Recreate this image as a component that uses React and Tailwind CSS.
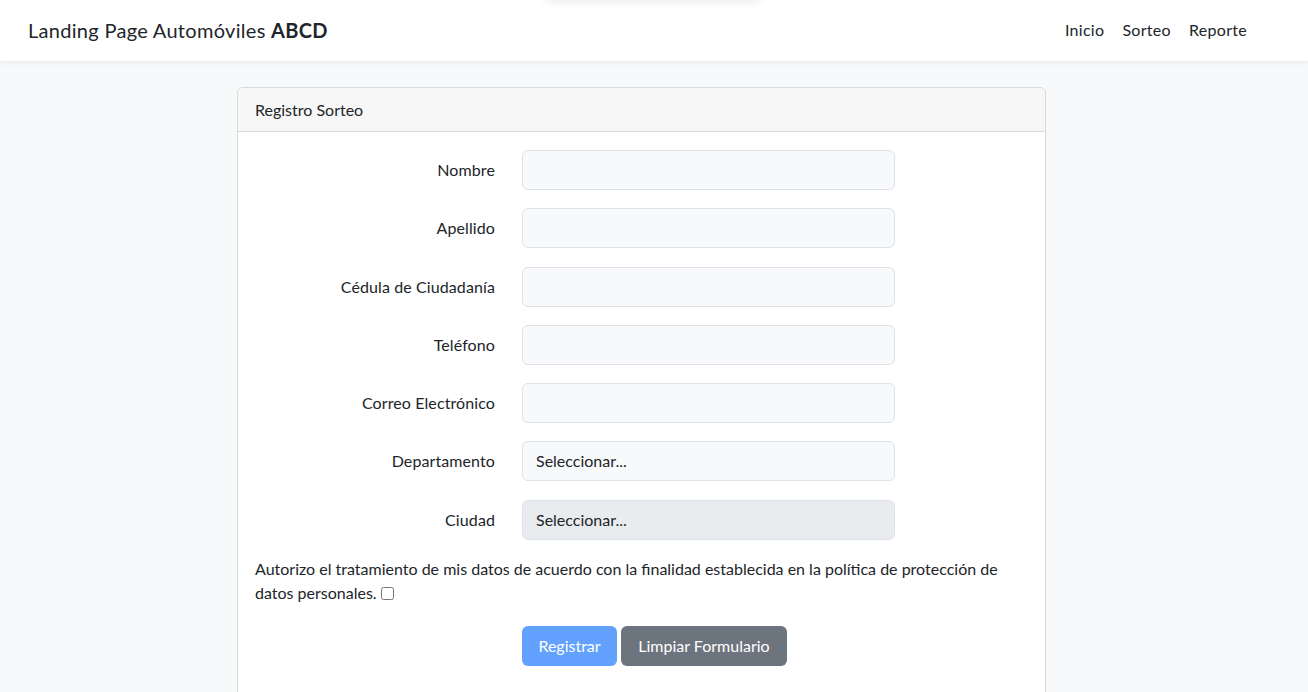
import React from 'react';

const FIELDS = ['Nombre', 'Apellido', 'Cédula de Ciudadanía', 'Teléfono', 'Correo Electrónico'];

const Row = ({ label, children }) => (
    <div className="flex items-center h-[40px]">
        <label className="w-[240px] text-right text-[16px] tracking-[0.1px]">{label}</label>
        <div className="ml-[27px] w-[373px]">{children}</div>
    </div>
);

export default function App() {
    return (
        <div className="min-h-[692px] bg-[#f8f9fa] text-[#212529] relative overflow-hidden" style={{ fontFamily: 'Lato, "Noto Sans", sans-serif' }}>
            <div className="absolute left-[545px] top-[-20px] w-[215px] h-[20px] bg-white shadow-[0_2px_8px_rgba(0,0,0,0.08)] rounded" />
            <nav className="h-[61px] bg-white shadow-[0_2px_4px_rgba(0,0,0,0.06)] flex items-center justify-between pl-[28px] pr-[61px] pb-[2px]">
                <a className="text-[20px] tracking-[0.3px]">Landing Page Automóviles <b className="font-bold">ABCD</b></a>
                <ul className="flex gap-[18px] text-[16px] tracking-[0.3px]">
                    <li>Inicio</li>
                    <li>Sorteo</li>
                    <li>Reporte</li>
                </ul>
            </nav>

            <div className="pt-[26px] pl-[237px]">
                <div className="w-[809px] bg-white border border-[#d9d9d9] rounded-[6px]">
                    <div className="h-[44px] bg-[#f7f7f7] border-b border-[#d9d9d9] rounded-t-[6px] flex items-center px-[17px] text-[16px]">
                        Registro Sorteo
                    </div>
                    <div className="px-[17px] pt-[18px] pb-[40px]">
                        <div className="flex flex-col gap-[18.3px]">
                            {FIELDS.map(f => (
                                <Row key={f} label={f}>
                                    <input className="w-full h-[40px] bg-[#f8f9fa] border border-[#dee2e6] rounded-[6px] px-3" />
                                </Row>
                            ))}
                            <Row label="Departamento">
                                <div className="w-full h-[40px] bg-[#f8f9fa] border border-[#dee2e6] rounded-[6px] px-[13px] flex items-center text-[16px]">Seleccionar...</div>
                            </Row>
                            <Row label="Ciudad">
                                <div className="w-full h-[40px] bg-[#e9ecef] border border-[#dee2e6] rounded-[6px] px-[13px] flex items-center text-[16px]">Seleccionar...</div>
                            </Row>
                        </div>
                        <p className="mt-[17px] text-[16px] leading-[24px]">
                            Autorizo el tratamiento de mis datos de acuerdo con la finalidad establecida en la política de protección de datos personales.{' '}
                            <input type="checkbox" className="w-[13px] h-[13px] align-[-1px]" />
                        </p>
                        <div className="mt-[21px] flex gap-[4px] pl-[267px]">
                            <button disabled className="h-[40px] w-[95px] rounded-[6px] bg-[#62a1fe] text-white text-[16px]">Registrar</button>
                            <button className="h-[40px] w-[166px] rounded-[6px] bg-[#6c757d] text-white text-[16px]">Limpiar Formulario</button>
                        </div>
                    </div>
                </div>
            </div>
        </div>
    );
}
